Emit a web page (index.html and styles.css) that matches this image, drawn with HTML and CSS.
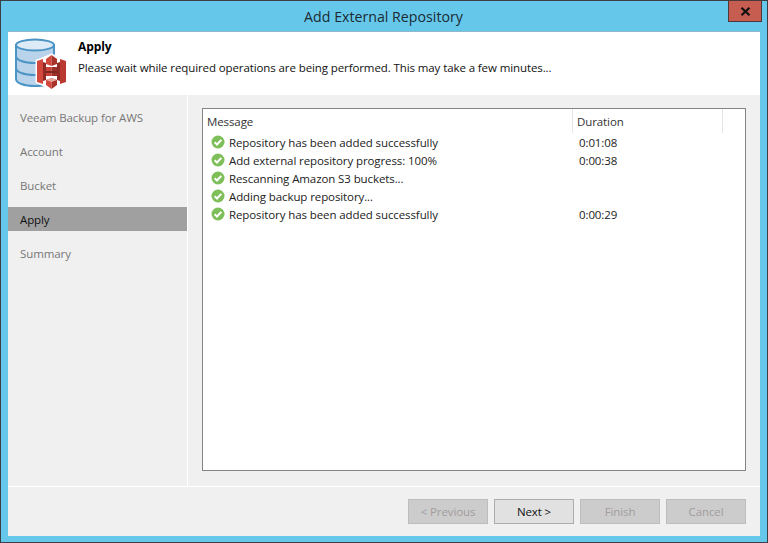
FILE: index.html
```html
<!DOCTYPE html>
<html lang="en">
<head>
<meta charset="utf-8">
<title>Add External Repository</title>
<link rel="stylesheet" href="styles.css">
</head>
<body>
<div class="window">
  <div class="titlebar">
    <span class="title">Add External Repository</span>
    <button class="close" aria-label="Close"><svg width="11" height="9" viewBox="0 0 11 9"><path d="M1.5 .8 L9.5 8.2 M9.5 .8 L1.5 8.2" stroke="#111" stroke-width="2.2" fill="none"/></svg></button>
  </div>
  <div class="dialog">
    <header class="head">
      <svg class="logo" width="52" height="52" viewBox="0 0 52 52">
        <g fill="#b9d3ea" stroke="#4d94c6" stroke-width="2">
          <path d="M1 7 V41 C1 45 9 48 20 48 C31 48 39 45 39 41 V7 Z"/>
          <path d="M1 18 C1 22 9 25 20 25 C31 25 39 22 39 18" fill="none"/>
          <path d="M1 30 C1 34 9 37 20 37 C31 37 39 34 39 30" fill="none"/>
          <ellipse cx="20" cy="7" rx="19" ry="5.500" fill="#dcebf6"/>
        </g>
        <path d="M20.500 22 L28 19 L36.500 15.500 L45 19 L52 22 V45 L45 48 L36.500 52 L28 48 L20.500 45 Z" fill="#fff"/>
        <path d="M22 23 L28 21 V46 L22 44 Z" fill="#d2483c"/>
        <path d="M28 24 L31 25 V42 L28 43 Z" fill="#8f2b24"/>
        <path d="M42 25 L45 24 V43 L42 42 Z" fill="#8f2b24"/>
        <path d="M45 21 L51 23 V44 L45 46 Z" fill="#b83a30"/>
        <path d="M31 21 L36.500 17 V28 L31 26 Z" fill="#d2483c"/>
        <path d="M36.500 17 L42 21 V26 L36.500 28 Z" fill="#a83229"/>
        <path d="M31 29 H36.500 V38 H31 Z" fill="#c84136"/>
        <path d="M36.500 29 H42 V38 H36.500 Z" fill="#9b2f27"/>
        <path d="M31 33 H42 V35 H31 Z" fill="#7e2620"/>
        <path d="M31 42 L36.500 40 V51 L31 47 Z" fill="#d2483c"/>
        <path d="M36.500 40 L42 42 V47 L36.500 51 Z" fill="#a83229"/>
        <path d="M31 42 L36.500 40 L42 42 L36.500 44 Z" fill="#eba79f"/>
      </svg>
      <div class="head-text">
        <h1 class="head-title">Apply</h1>
        <p class="head-desc">Please wait while required operations are being performed. This may take a few minutes...</p>
      </div>
    </header>
    <div class="middle">
      <nav class="steps">
        <div class="step">Veeam Backup for AWS</div>
        <div class="step">Account</div>
        <div class="step">Bucket</div>
        <div class="step current">Apply</div>
        <div class="step">Summary</div>
      </nav>
      <main class="content">
        <div class="list">
          <div class="list-head">
            <div class="col-msg">Message</div>
            <div class="col-dur">Duration</div>
            <div class="col-end"></div>
          </div>
          <div class="row"><svg class="ok" viewBox="0 0 14 14"><circle cx="7" cy="7" r="6.500" fill="#7fbf5a"/><path d="M3.700 7.200 L6 9.500 L10.300 4.900" stroke="#fff" stroke-width="2" fill="none"/></svg><span class="msg">Repository has been added successfully</span><span class="dur">0:01:08</span></div>
          <div class="row"><svg class="ok" viewBox="0 0 14 14"><circle cx="7" cy="7" r="6.500" fill="#7fbf5a"/><path d="M3.700 7.200 L6 9.500 L10.300 4.900" stroke="#fff" stroke-width="2" fill="none"/></svg><span class="msg">Add external repository progress: 100%</span><span class="dur">0:00:38</span></div>
          <div class="row"><svg class="ok" viewBox="0 0 14 14"><circle cx="7" cy="7" r="6.500" fill="#7fbf5a"/><path d="M3.700 7.200 L6 9.500 L10.300 4.900" stroke="#fff" stroke-width="2" fill="none"/></svg><span class="msg">Rescanning Amazon S3 buckets...</span><span class="dur"></span></div>
          <div class="row"><svg class="ok" viewBox="0 0 14 14"><circle cx="7" cy="7" r="6.500" fill="#7fbf5a"/><path d="M3.700 7.200 L6 9.500 L10.300 4.900" stroke="#fff" stroke-width="2" fill="none"/></svg><span class="msg">Adding backup repository...</span><span class="dur"></span></div>
          <div class="row"><svg class="ok" viewBox="0 0 14 14"><circle cx="7" cy="7" r="6.500" fill="#7fbf5a"/><path d="M3.700 7.200 L6 9.500 L10.300 4.900" stroke="#fff" stroke-width="2" fill="none"/></svg><span class="msg">Repository has been added successfully</span><span class="dur">0:00:29</span></div>
        </div>
      </main>
    </div>
    <footer class="foot">
      <button class="btn" disabled>&lt; Previous</button>
      <button class="btn active">Next &gt;</button>
      <button class="btn" disabled>Finish</button>
      <button class="btn" disabled>Cancel</button>
    </footer>
  </div>
</div>
</body>
</html>
```
FILE: styles.css
```css
* { box-sizing: border-box; }
html, body { margin: 0; padding: 0; }
body {
  width: 768px;
  height: 543px;
  overflow: hidden;
  font-family: "Open Sans", "Noto Sans", "Liberation Sans", sans-serif;
  font-size: 11.500px;
  letter-spacing: -0.1px;
  color: #222;
}
.window {
  width: 768px;
  height: 543px;
  display: flex;
  flex-direction: column;
  background: #65c8ea;
  border: 1px solid #3a3f45;
  padding: 0 6px 6px 7px;
}
.titlebar {
  height: 30px;
  flex: none;
  display: flex;
  align-items: center;
  justify-content: center;
  position: relative;
}
.title {
  font-size: 14.200px;
  letter-spacing: 0;
  color: #1c2a33;
  margin-left: -2px;
}
.close {
  position: absolute;
  top: -1px;
  right: -1px;
  width: 34px;
  height: 22px;
  padding: 0;
  background: #c75c50;
  border: 1px solid #4a3a3c;
  display: flex;
  align-items: center;
  justify-content: center;
}
.dialog {
  flex: 1;
  min-height: 0;
  display: flex;
  flex-direction: column;
  background: #f0f0f0;
  margin-right: 1px;
}
.head {
  height: 64px;
  flex: none;
  background: #fff;
  display: flex;
  border-top: 1px solid #8fb9c9;
}
.logo {
  flex: none;
  margin: 6px 0 0 7px;
}
.head-text { margin-left: 11px; padding-top: 6px; }
.head-title {
  margin: 0;
  font-size: 12px;
  line-height: 17px;
  font-weight: 700;
  color: #000;
}
.head-desc {
  margin: 4px 0 0;
  line-height: 17px;
  color: #111;
}
.middle {
  flex: 1;
  min-height: 0;
  display: flex;
  border-bottom: 1px solid #fff;
}
.steps {
  width: 180px;
  flex: none;
  border-right: 1px solid #fff;
  padding-top: 10px;
  display: flex;
  flex-direction: column;
  gap: 10px;
}
.step {
  height: 24px;
  line-height: 25px;
  padding-left: 12px;
  color: #777;
}
.step.current {
  background: #a0a0a0;
  color: #111;
}
.content {
  flex: 1;
  min-width: 0;
  padding: 13px 14px 15px 14px;
}
.list {
  height: 100%;
  background: #fff;
  border: 1px solid #848484;
}
.list-head {
  height: 24px;
  display: flex;
  color: #333;
}
.col-msg, .col-dur, .col-end {
  line-height: 26px;
  padding-left: 4px;
}
.col-msg { width: 370px; border-right: 1px solid #e5e5e5; }
.col-dur { width: 150px; border-right: 1px solid #e5e5e5; }
.col-end { flex: 1; }
.row {
  height: 18px;
  display: flex;
  align-items: center;
  color: #222;
}
.ok {
  width: 14px;
  height: 14px;
  flex: none;
  margin-left: 8px;
}
.msg {
  margin-left: 4px;
  width: 350px;
  flex: none;
  white-space: nowrap;
}
.dur { margin-left: 0; }
.foot {
  height: 49px;
  flex: none;
  display: flex;
  justify-content: flex-end;
  gap: 6px;
  padding: 12px 14px 0 0;
}
.btn {
  width: 80px;
  height: 25px;
  padding: 0;
  font: inherit;
  letter-spacing: inherit;
  background: #cccccc;
  border: 1px solid #bdbdbd;
  color: #a39c9c;
}
.btn.active {
  background: #e1e1e1;
  border-color: #adadad;
  color: #111;
}
```
